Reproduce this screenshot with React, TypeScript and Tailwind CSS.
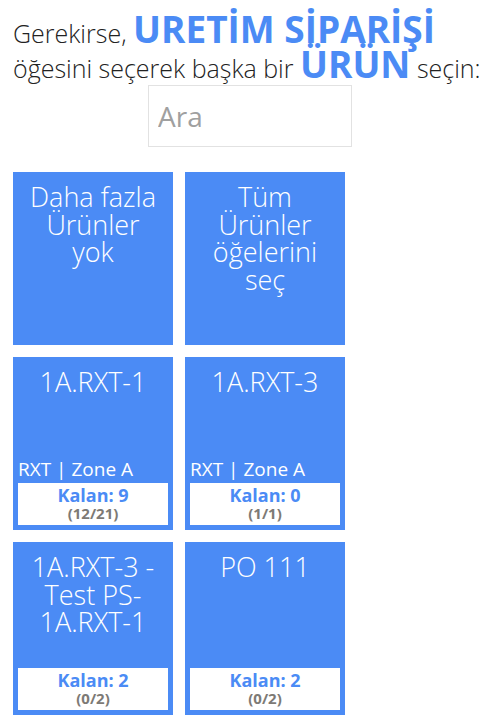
import React from "react";

type Tile = {
  title: string;
  sub?: string;
  kalan?: string;
  ratio?: string;
};

const tiles: Tile[] = [
  { title: "Daha fazla Ürünler yok" },
  { title: "Tüm Ürünler öğelerini seç" },
  { title: "1A.RXT-1", sub: "RXT | Zone A", kalan: "Kalan: 9", ratio: "(12/21)" },
  { title: "1A.RXT-3", sub: "RXT | Zone A", kalan: "Kalan: 0", ratio: "(1/1)" },
  { title: "1A.RXT-3 - Test PS-1A.RXT-1", kalan: "Kalan: 2", ratio: "(0/2)" },
  { title: "PO 111", kalan: "Kalan: 2", ratio: "(0/2)" },
];

export default function App() {
  return (
    <div
      className="w-[500px] h-[725px] bg-white overflow-hidden px-[13px] pt-[16px]"
      style={{ fontFamily: '"Open Sans", "Noto Sans", sans-serif' }}
    >
      <div className="text-[25px] leading-[35px] font-light text-[#222]">
        Gerekirse,{" "}
        <span className="text-[37px] font-bold text-[#4b8bf5] leading-[0]">URETİM SİPARİŞİ</span>{" "}
        öğesini seçerek başka bir{" "}
        <span className="text-[37px] font-bold text-[#4b8bf5] leading-[0]">ÜRÜN</span> seçin:
      </div>
      <div className="flex justify-center mt-[-1px]">
        <div className="w-[204px] h-[62px] border border-[#e2e2e2] flex items-center px-[9px]">
          <input
            placeholder="Ara"
            className="w-full outline-none text-[28px] font-normal text-[#555] placeholder:text-[#a0a0a0] bg-transparent"
          />
        </div>
      </div>
      <div className="grid grid-cols-[160px_160px] gap-[12px] mt-[25px]">
        {tiles.map((t, i) => (
          <div key={i} className="h-[173px] bg-[#4b8bf5] flex flex-col p-[5px]">
            <div className="flex-1 text-center text-white font-light text-[27px] leading-[27.5px] pt-[6px] px-[6px]">
              {t.title}
            </div>
            {t.sub && (
              <div className="text-white text-[19px] leading-[22px] mb-[3px] whitespace-nowrap">{t.sub}</div>
            )}
            {t.kalan && (
              <div className="bg-white h-[42px] flex flex-col items-center justify-center">
                <div className="text-[#4b8bf5] font-bold text-[18px] leading-[19px]">{t.kalan}</div>
                <div className="text-[#7d7a75] font-bold text-[15px] leading-[17px]">{t.ratio}</div>
              </div>
            )}
          </div>
        ))}
      </div>
    </div>
  );
}
